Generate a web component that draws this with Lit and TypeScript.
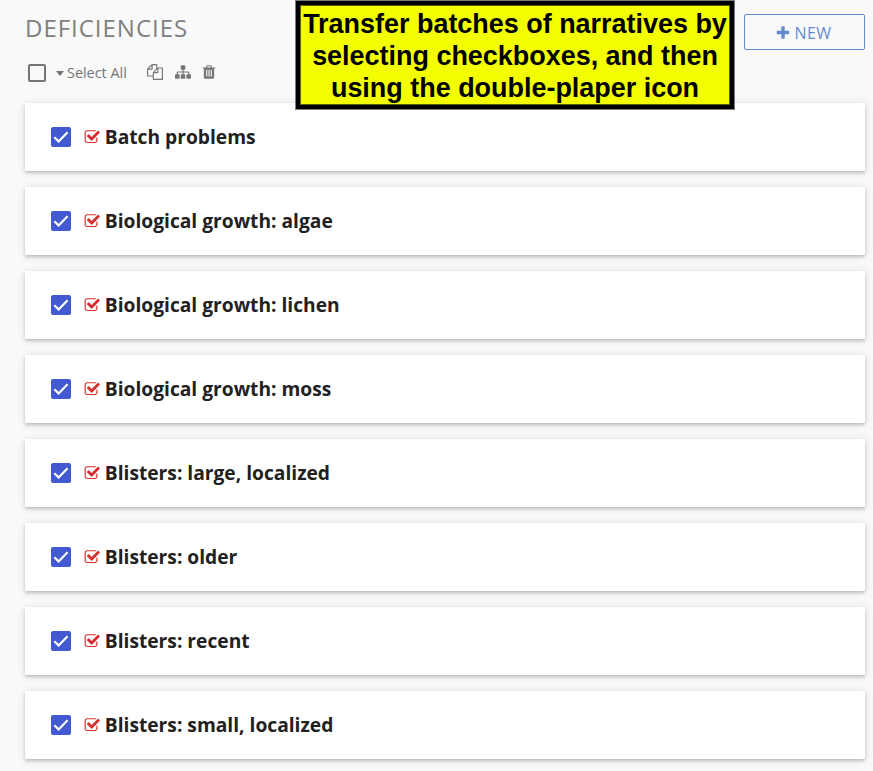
import { LitElement, html, css, svg } from "lit";
import { customElement, property } from "lit/decorators.js";

const ICONS: Record<string, string> = {
  copy: "M1696 384q40 0 68 28t28 68v1216q0 40-28 68t-68 28h-960q-40 0-68-28t-28-68v-288h-544q-40 0-68-28t-28-68v-672q0-40 20-88t48-76l408-408q28-28 76-48t88-20h416q40 0 68 28t28 68v328q68-40 128-40h416zm-544 213l-299 299h299v-299zm-640-384l-299 299h299v-299zm196 647l316-316v-416h-384v416q0 40-28 68t-68 28h-416v640h512v-256q0-40 20-88t48-76zm956 804v-1152h-384v416q0 40-28 68t-68 28h-416v640h896z",
  sitemap: "M1792 1248v320q0 40-28 68t-68 28h-320q-40 0-68-28t-28-68v-320q0-40 28-68t68-28h96v-192h-512v192h96q40 0 68 28t28 68v320q0 40-28 68t-68 28h-320q-40 0-68-28t-28-68v-320q0-40 28-68t68-28h96v-192h-512v192h96q40 0 68 28t28 68v320q0 40-28 68t-68 28h-320q-40 0-68-28t-28-68v-320q0-40 28-68t68-28h96v-192q0-52 38-90t90-38h512v-192h-96q-40 0-68-28t-28-68v-320q0-40 28-68t68-28h320q40 0 68 28t28 68v320q0 40-28 68t-68 28h-96v192h512q52 0 90 38t38 90v192h96q40 0 68 28t28 68z",
  trash: "M704 1376v-704q0-14-9-23t-23-9h-64q-14 0-23 9t-9 23v704q0 14 9 23t23 9h64q14 0 23-9t9-23zm256 0v-704q0-14-9-23t-23-9h-64q-14 0-23 9t-9 23v704q0 14 9 23t23 9h64q14 0 23-9t9-23zm256 0v-704q0-14-9-23t-23-9h-64q-14 0-23 9t-9 23v704q0 14 9 23t23 9h64q14 0 23-9t9-23zm-544-992h448l-48-117q-7-9-17-11h-317q-10 2-17 11zm928 32v64q0 14-9 23t-23 9h-96v948q0 83-47 143.5t-113 60.5h-832q-66 0-113-58.5t-47-141.5v-952h-96q-14 0-23-9t-9-23v-64q0-14 9-23t23-9h309l70-167q15-37 54-63t79-26h320q40 0 79 26t54 63l70 167h309q14 0 23 9t9 23z",
  check: "M1472 930v318q0 119-84.5 203.5t-203.5 84.5h-832q-119 0-203.5-84.5t-84.5-203.5v-832q0-119 84.5-203.5t203.5-84.5h832q63 0 117 25 15 7 18 23 3 17-9 29l-49 49q-10 10-23 10-3 0-9-2-23-6-45-6h-832q-66 0-113 47t-47 113v832q0 66 47 113t113 47h832q66 0 113-47t47-113v-254q0-13 9-22l64-64q10-10 23-10 6 0 12 3 20 8 20 29zm231-489l-814 814q-24 24-57 24t-57-24l-430-430q-24-24-24-57t24-57l110-110q24-24 57-24t57 24l263 263 647-647q24-24 57-24t57 24l110 110q24 24 24 57t-24 57z",
  plus: "M1600 736v192q0 40-28 68t-68 28h-416v416q0 40-28 68t-68 28h-192q-40 0-68-28t-28-68v-416h-416q-40 0-68-28t-28-68v-192q0-40 28-68t68-28h416v-416q0-40 28-68t68-28h192q40 0 68 28t28 68v416h416q40 0 68 28t28 68z",
};

const icon = (name: string, cls: string) => html`
  <svg class="icon ${cls}" viewBox="0 0 1792 1792" aria-hidden="true">${svg`<path d=${ICONS[name]}></path>`}</svg>
`;

@customElement("deficiency-card")
class DeficiencyCard extends LitElement {
  @property() label = "";

  static styles = css`
    :host {
      display: flex;
      align-items: center;
      box-sizing: border-box;
      height: 68px;
      padding-left: 26px;
      background: #fff;
      border-radius: 1px;
      box-shadow: 0 2px 3px rgba(0, 0, 0, 0.17), 0 1px 8px rgba(0, 0, 0, 0.13);
    }
    .box {
      width: 20px;
      height: 20px;
      border-radius: 2px;
      background: #4259d2;
      flex: none;
    }
    .tick {
      display: block;
      fill: none;
      stroke: #fff;
      stroke-width: 2.2;
    }
    .icon {
      width: 16.4px;
      height: 16.4px;
      fill: #d3302f;
      margin: 1px 0 0 13.2px;
      flex: none;
    }
    .label {
      margin-left: 4.2px;
      font: 700 19.22px/26px "Open Sans", sans-serif;
      color: #212121;
      white-space: nowrap;
    }
  `;

  render() {
    return html`
      <span class="box"><svg class="tick" width="20" height="20" viewBox="0 0 20 20"><path d="M3.3 10.2l4.3 4.2 9-9.2"></path></svg></span>
      ${icon("check", "")}
      <span class="label">${this.label}</span>
    `;
  }
}

@customElement("app-root")
class AppRoot extends LitElement {
  private items = [
    "Batch problems",
    "Biological growth: algae",
    "Biological growth: lichen",
    "Biological growth: moss",
    "Blisters: large, localized",
    "Blisters: older",
    "Blisters: recent",
    "Blisters: small, localized",
  ];

  static styles = css`
    :host {
      display: block;
      position: relative;
      box-sizing: border-box;
      height: 771px;
      overflow: hidden;
      padding: 14px 8px 0 25px;
      background: #f9f9f9;
      font-family: "Open Sans", sans-serif;
      color: #757575;
    }
    .header {
      display: flex;
      justify-content: space-between;
      height: 48px;
    }
    .title {
      margin: 0;
      font-size: 24px;
      line-height: 28px;
      font-weight: 400;
      letter-spacing: 0.98px;
      color: #808080;
    }
    .new {
      display: flex;
      align-items: center;
      justify-content: center;
      box-sizing: border-box;
      width: 121px;
      height: 36px;
      padding: 2px 2px 0 0;
      gap: 3px;
      border: 1px solid #628bd0;
      border-radius: 2px;
      background: transparent;
      color: #628bd0;
      font: 400 16px/20px "Open Sans", sans-serif;
      letter-spacing: 0.5px;
    }
    .icon {
      width: 16px;
      height: 16px;
      fill: currentColor;
      flex: none;
    }
    .toolbar {
      display: flex;
      align-items: center;
      height: 22px;
      padding-left: 3px;
    }
    .box {
      box-sizing: border-box;
      width: 18px;
      height: 18px;
      border: 2px solid #757575;
      border-radius: 2px;
    }
    .caret {
      margin-left: 10px;
      border: 4.5px solid transparent;
      border-top: 5px solid #757575;
      border-bottom: 0;
    }
    .select {
      margin-left: 3px;
      width: 80px;
      font-size: 14.4px;
      line-height: 20px;
      white-space: nowrap;
    }
    .copy,
    .sitemap,
    .trash {
      margin-top: -2px;
    }
    .sitemap {
      margin-left: 12px;
    }
    .trash {
      margin-left: 10px;
    }
    .list {
      display: flex;
      flex-direction: column;
      gap: 16px;
      margin-top: 19px;
    }
    .callout {
      position: absolute;
      left: 296px;
      top: 1px;
      box-sizing: border-box;
      width: 438px;
      height: 108px;
      padding-top: 2px;
      border: 4px solid #000;
      outline: 1px solid rgba(0, 0, 0, 0.5);
      box-shadow: inset 0 0 0 1px #5c6100;
      background: #f3ff00;
      color: #000;
      font: 700 26.95px/32px "Liberation Sans", Arial, sans-serif;
      text-align: center;
      white-space: nowrap;
    }
    .callout div:first-child {
      margin-top: 1px;
    }
  `;

  render() {
    return html`
      <div class="header">
        <h1 class="title">DEFICIENCIES</h1>
        <button class="new">${icon("plus", "")}<span>NEW</span></button>
      </div>
      <div class="toolbar">
        <span class="box"></span>
        <span class="caret"></span>
        <span class="select">Select All</span>
        ${icon("copy", "copy")} ${icon("sitemap", "sitemap")} ${icon("trash", "trash")}
      </div>
      <div class="list">
        ${this.items.map((label) => html`<deficiency-card .label=${label}></deficiency-card>`)}
      </div>
      <div class="callout">
        <div>Transfer batches of narratives by</div>
        <div>selecting checkboxes, and then</div>
        <div>using the double-plaper icon</div>
      </div>
    `;
  }
}
